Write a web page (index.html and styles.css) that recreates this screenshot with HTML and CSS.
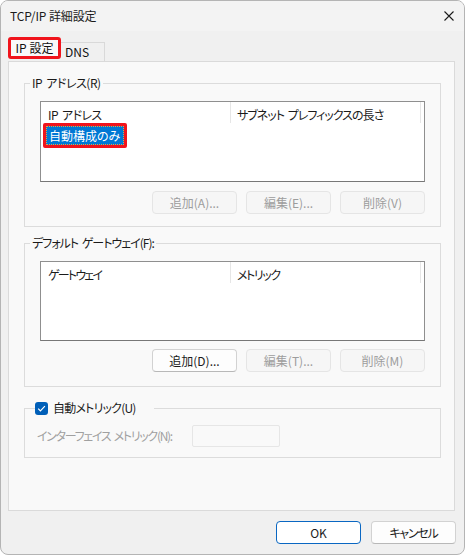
FILE: index.html
```html
<!DOCTYPE html>
<html lang="ja">
<head>
<meta charset="utf-8">
<title>TCP/IP 詳細設定</title>
<link rel="stylesheet" href="styles.css">
</head>
<body>
<div class="window">
  <div class="titlebar">
    <span class="title">TCP/IP 詳細設定</span>
    <svg class="close" width="10" height="10" viewBox="0 0 10 10"><path d="M0.5 0.5 L9.5 9.5 M9.5 0.5 L0.5 9.5" stroke="#1b1b1b" stroke-width="1.1" fill="none"/></svg>
  </div>
  <div class="tabs">
    <div class="tab tab-active">IP 設定</div>
    <div class="tab tab-inactive">DNS</div>
  </div>
  <div class="page">
    <fieldset class="group group-ip">
      <legend class="legend legend-ip">IP アドレス(R)</legend>
      <div class="group-body">
        <div class="list list-ip">
          <div class="list-header">
            <div class="col col1"><span class="t-ipaddr">IP アドレス</span></div>
            <div class="col col2"><span class="t-subnet">サブネット プレフィックスの長さ</span></div>
          </div>
          <div class="sel-mark"><div class="sel-item">自動構成のみ</div></div>
        </div>
        <div class="btn-row">
          <button class="btn" disabled>追加(A)...</button>
          <button class="btn" disabled>編集(E)...</button>
          <button class="btn" disabled>削除(V)</button>
        </div>
      </div>
    </fieldset>
    <fieldset class="group group-gw">
      <legend class="legend legend-gw">デフォルト ゲートウェイ(F):</legend>
      <div class="group-body">
        <div class="list list-gw">
          <div class="list-header">
            <div class="col col1"><span class="t-gateway">ゲートウェイ</span></div>
            <div class="col col2"><span class="t-metric">メトリック</span></div>
          </div>
        </div>
        <div class="btn-row btn-row-gw">
          <button class="btn btn-enabled">追加(D)...</button>
          <button class="btn" disabled>編集(T)...</button>
          <button class="btn" disabled>削除(M)</button>
        </div>
      </div>
    </fieldset>
    <fieldset class="group group-metric">
      <legend class="legend legend-check">
        <span class="checkbox"><svg width="13" height="13" viewBox="0 0 13 13"><path d="M3.2 6.6 L5.4 8.8 L9.9 4.2" stroke="#fff" stroke-width="1.2" fill="none"/></svg></span>
        <span class="t-auto">自動メトリック(U)</span>
      </legend>
      <div class="group-body metric-body">
        <span class="metric-label">インターフェイス メトリック(N):</span>
        <span class="metric-input"></span>
      </div>
    </fieldset>
  </div>
  <div class="footer">
    <button class="btn btn-ok">OK</button>
    <button class="btn btn-enabled btn-cancel">キャンセル</button>
  </div>
</div>
</body>
</html>
```

FILE: styles.css
```css
* { box-sizing: border-box; }
html, body { margin: 0; padding: 0; background: #ffffff; }
body {
  font-family: "Noto Sans CJK JP", "Noto Sans", sans-serif;
  font-size: 12px;
  line-height: 16px;
  color: #1b1b1b;
  font-feature-settings: "palt";
}
.window {
  width: 465px;
  height: 555px;
  border: 1px solid #b4b4b4;
  border-radius: 8px;
  background: #f0f0f0;
  overflow: hidden;
  display: flex;
  flex-direction: column;
}
.titlebar {
  height: 30px;
  background: #f3f3f3;
  display: flex;
  align-items: center;
  justify-content: space-between;
  padding: 0 10px 0 9px;
  flex: none;
}
.title { font-size: 12px; letter-spacing: -0.1px; }
.close { display: block; }
.tabs {
  height: 30px;
  display: flex;
  align-items: flex-end;
  padding-left: 7px;
  flex: none;
}
.tab { font-size: 12px; }
.tab-active {
  width: 53px;
  height: 22px;
  margin-bottom: 2px;
  border: 3px solid #f0141c;
  border-radius: 3px;
  background: #f9f9f9;
  display: flex;
  align-items: center;
  justify-content: center;
  color: #111;
}
.tab-inactive {
  width: 44px;
  height: 19px;
  border: 1px solid #d9d9d9;
  border-bottom: none;
  border-left: none;
  background: #f0f0f0;
  padding-left: 4px;
  display: flex;
  align-items: center;
  color: #111;
}
.page {
  height: 450px;
  margin: 0 9px 0 7px;
  border: 1px solid #dadada;
  background: #f9f9f9;
  padding: 0 13px 0 15px;
  flex: none;
}
.group {
  margin: 0;
  padding: 0;
  border: 1px solid #dcdcdc;
  min-inline-size: 0;
}
.group-ip { margin-top: 13px; }
.group-gw { margin-top: 8px; }
.group-metric { margin-top: 13px; }
.legend {
  margin-left: 5px;
  padding: 0 2px;
  line-height: 16px;
  color: #1b1b1b;
  white-space: nowrap;
}
.legend-ip { letter-spacing: -0.5px; word-spacing: 2px; }
.legend-gw { letter-spacing: -1px; word-spacing: 2px; }
.t-ipaddr { letter-spacing: -0.6px; word-spacing: 2px; }
.t-subnet { letter-spacing: -1px; word-spacing: 2px; }
.t-gateway { letter-spacing: -1.8px; }
.t-metric { letter-spacing: -1.4px; }
.t-auto { letter-spacing: -0.8px; }
.group-body { padding: 10px 15px 12px 15px; }
.group-gw .group-body { padding-bottom: 14px; }
.list {
  background: #ffffff;
  border: 1px solid #8f8f8f;
  border-bottom-color: #777777;
}
.list-ip { height: 81px; }
.list-gw { height: 80px; }
.list-header { display: flex; height: 21px; }
.col {
  width: 190px;
  padding: 5px 0 0 7px;
  border-right: 1px solid #e6e6e6;
  white-space: nowrap;
  overflow: hidden;
}
.col2 { padding-left: 6px; }
.sel-mark {
  display: inline-block;
  margin-left: 2px;
  border: 3px solid #f0141c;
  border-radius: 2px;
}
.sel-item {
  width: 78px;
  height: 19px;
  background: #0078d4;
  color: #ffffff;
  padding: 1px 0 0 3px;
  outline: 1px dotted #e8a23c;
  outline-offset: -1px;
  line-height: 17px;
  white-space: nowrap;
}
.btn-row {
  display: flex;
  justify-content: flex-end;
  gap: 9px;
  margin-top: 9px;
}
.btn-row-gw { margin-top: 8px; }
.btn {
  width: 85px;
  height: 23px;
  font-family: inherit;
  font-size: 12px;
  line-height: 16px;
  font-feature-settings: "palt";
  border-radius: 4px;
  border: 1px solid #e5e5e5;
  background: #f6f6f6;
  color: #9d9d9d;
  padding: 0;
}
.btn-enabled {
  background: #fdfdfd;
  border-color: #d2d2d2;
  border-bottom-color: #b8b8b8;
  color: #1b1b1b;
}
.btn-cancel { letter-spacing: -1.2px; }
.btn-ok {
  background: #ffffff;
  border: 1px solid #0a67c2;
  color: #1b1b1b;
}
.legend-check {
  margin-left: 10px;
  padding: 0 18px 0 0;
  display: flex;
  align-items: center;
}
.checkbox {
  width: 13px;
  height: 13px;
  border-radius: 3px;
  background: #005fb8;
  display: inline-flex;
  margin-right: 5px;
}
.checkbox svg { display: block; }
.metric-body {
  display: flex;
  align-items: center;
  padding: 9px 0 10px 12px;
}
.metric-label {
  width: 155px;
  flex: none;
  color: #a0a0a0;
  white-space: nowrap;
  letter-spacing: -1.3px;
  word-spacing: 2px;
}
.metric-input {
  width: 88px;
  height: 22px;
  flex: none;
  border: 1px solid #e6e6e6;
  border-radius: 2px;
  background: #f9f9f9;
}
.footer {
  display: flex;
  justify-content: flex-end;
  gap: 10px;
  padding: 10px 8px 0 0;
}
```
